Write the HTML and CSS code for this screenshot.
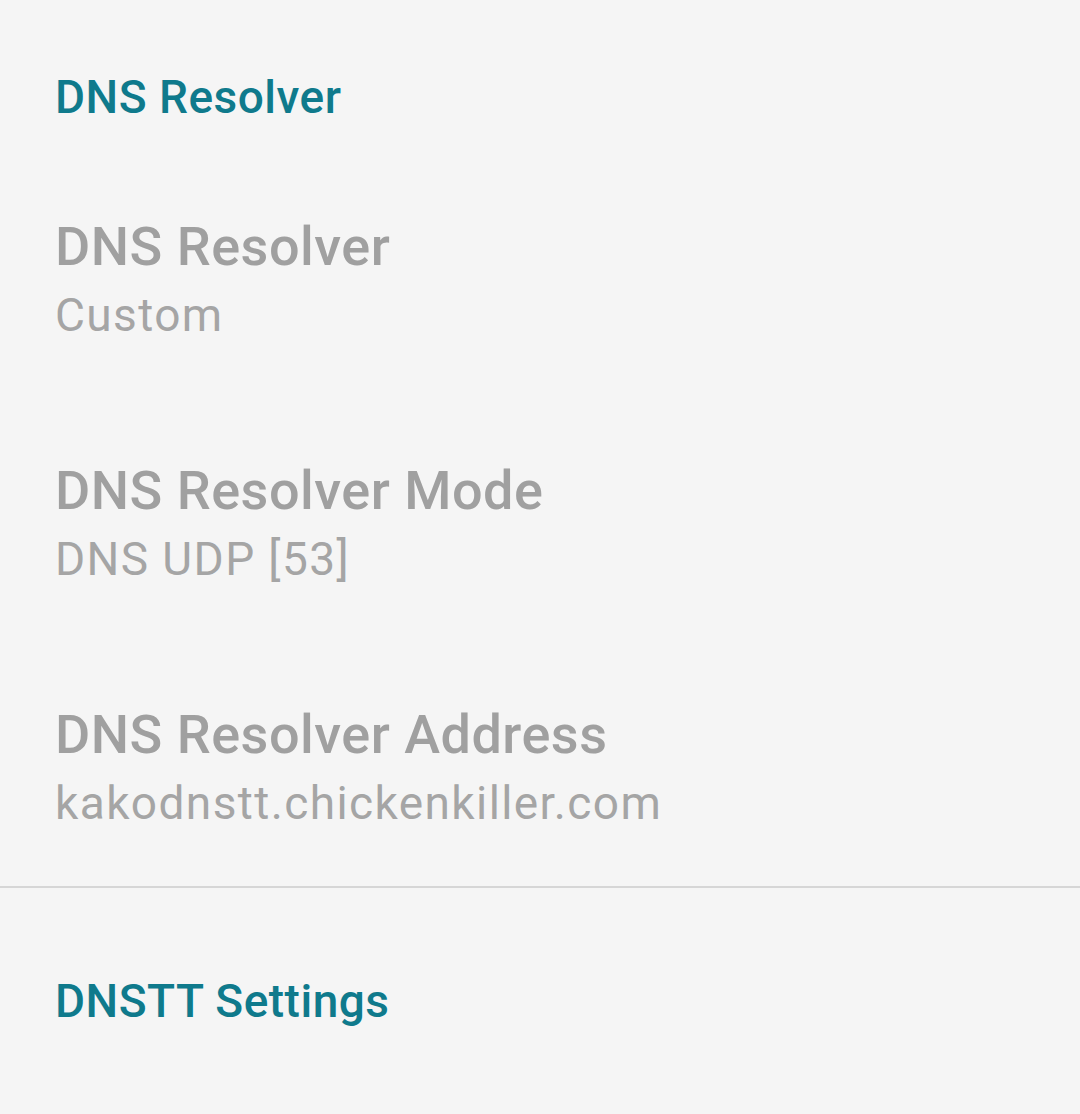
FILE: index.html
```html
<!DOCTYPE html>
<html>
<head>
<meta charset="utf-8">
<link rel="stylesheet" href="styles.css">
</head>
<body>
<div class="screen">
  <section class="group">
    <div class="group-header">DNS Resolver</div>
    <div class="pref">
      <div class="pref-title">DNS Resolver</div>
      <div class="pref-summary">Custom</div>
    </div>
    <div class="pref">
      <div class="pref-title">DNS Resolver Mode</div>
      <div class="pref-summary">DNS UDP [53]</div>
    </div>
    <div class="pref">
      <div class="pref-title">DNS Resolver Address</div>
      <div class="pref-summary">kakodnstt.chickenkiller.com</div>
    </div>
  </section>
  <div class="divider"></div>
  <section class="group">
    <div class="group-header next">DNSTT Settings</div>
  </section>
</div>
</body>
</html>
```
FILE: styles.css
```css
html, body {
  margin: 0;
  padding: 0;
  background: #f5f5f5;
}
.screen {
  width: 1080px;
  height: 1114px;
  overflow: hidden;
  background: #f5f5f5;
  font-family: Roboto, "Noto Sans", sans-serif;
}
.group-header {
  padding: 67px 0 32px 55px;
  font-size: 46px;
  line-height: 60px;
  font-weight: 500;
  letter-spacing: 0.5px;
  color: #0f7a8c;
}
.group-header.next {
  padding-top: 83px;
}
.pref {
  padding: 55px 0 53px 55px;
  display: flex;
  flex-direction: column;
}
.pref:last-child {
  padding-bottom: 48px;
}
.pref-title {
  font-size: 54px;
  line-height: 66px;
  font-weight: 500;
  letter-spacing: 0.5px;
  color: #a0a0a0;
}
.pref-summary {
  font-size: 46px;
  line-height: 70px;
  letter-spacing: 1.4px;
  color: #a5a5a5;
}
.divider {
  height: 2px;
  background: #d6d6d6;
}
```
